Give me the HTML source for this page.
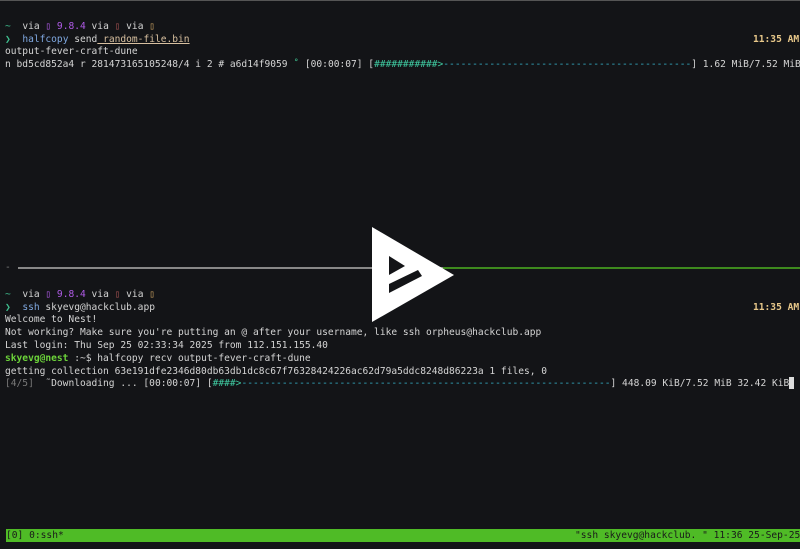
<!DOCTYPE html>
<html><head><meta charset="utf-8"><style>
html,body{margin:0;padding:0;background:#131417;width:800px;height:549px;overflow:hidden;position:relative}
.l{position:absolute;left:5px;white-space:pre;font-family:"DejaVu Sans Mono","Liberation Mono",monospace;font-size:9.58px;line-height:13px;color:#d4d4d4}
.g{color:#3fbf8f}.p{color:#b05be8}.b{color:#7fa8e0}.y{color:#e8c88a;font-weight:bold}.u{text-decoration:underline;color:#d8c0a0}
.c{color:#36b0c8}.t{color:#3fc9a0}.gr{color:#7a7a7a}.gn{color:#6cd33a;font-weight:bold}
.cur{display:inline-block;width:5px;height:12px;background:#ddd;vertical-align:top}
</style></head><body>
<div style="position:absolute;left:0;top:0;width:800px;height:1px;background:#555"></div>
<div class="l" style="top:20px"><span class="g">~</span>  via <span class="p">▯ 9.8.4</span> via <span style="color:#a05050">▯</span> via <span style="color:#c8a060">▯</span></div>
<div class="l y" style="top:33px;left:753px">11:35 AM</div>
<div class="l" style="top:33px"><span class="g">❯</span>  <span class="b">halfcopy</span> send<span class="u"> random-file.bin</span></div>
<div class="l" style="top:45px">output-fever-craft-dune</div>
<div class="l" style="top:58px">n bd5cd852a4 r 281473165105248/4 i 2 # a6d14f9059 <span class="g">˚</span> [00:00:07] [<span class="t">###########&gt;</span><span class="c">-------------------------------------------</span>] 1.62 MiB/7.52 MiB</div>
<div class="l gr" style="top:261px">-</div>
<div style="position:absolute;left:18px;top:267px;width:425px;height:2px;background:#888"></div>
<div style="position:absolute;left:443px;top:267px;width:357px;height:2px;background:#3e8a1e"></div>
<div class="l" style="top:288px"><span class="g">~</span>  via <span class="p">▯ 9.8.4</span> via <span style="color:#a05050">▯</span> via <span style="color:#c8a060">▯</span></div>
<div class="l y" style="top:301px;left:753px">11:35 AM</div>
<div class="l" style="top:301px"><span class="g">❯</span>  <span class="b">ssh</span> skyevg@hackclub.app</div>
<div class="l" style="top:313px">Welcome to Nest!</div>
<div class="l" style="top:326px">Not working? Make sure you're putting an @ after your username, like ssh orpheus@hackclub.app</div>
<div class="l" style="top:339px">Last login: Thu Sep 25 02:33:34 2025 from 112.151.155.40</div>
<div class="l" style="top:352px"><span class="gn">skyevg@nest</span> :~$ halfcopy recv output-fever-craft-dune</div>
<div class="l" style="top:365px">getting collection 63e191dfe2346d80db63db1dc8c67f76328424226ac62d79a5ddc8248d86223a 1 files, 0</div>
<div class="l" style="top:377px"><span class="gr">[4/5]</span>  ˜Downloading ... [00:00:07] [<span class="t">####&gt;</span><span class="c">----------------------------------------------------------------</span>] 448.09 KiB/7.52 MiB 32.42 KiB<span class="cur"></span></div>
<div style="position:absolute;left:6px;top:529px;width:794px;height:13px;background:#4fbb26"></div>
<div class="l" style="top:529px;left:6px;color:#1a1a1a;font-size:9.6px">[0] 0:ssh*</div>
<div class="l" style="top:529px;left:575px;color:#1a1a1a;font-size:9.6px">"ssh skyevg@hackclub. " 11:36 25-Sep-25</div>
<svg style="position:absolute;left:0;top:0" width="800" height="549">
<polygon points="372,227 372,322 454,275" fill="#fff"/>
<polygon points="389,256 389,275 405,266" fill="#131417"/>
<polygon points="389,284 389,293 422,276 418,270" fill="#131417"/>
</svg>
</body></html>
